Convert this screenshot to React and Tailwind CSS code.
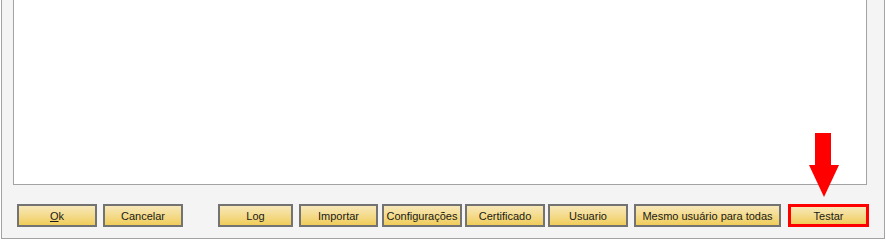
import React from 'react';

const Btn = ({ children, className = '' }) => (
    <button
        className={`h-[23px] border-2 border-[#737373] bg-gradient-to-b from-[#f7e8b8] to-[#f1cd58] text-[11px] text-[#1a1a1a] leading-none flex items-center justify-center pt-[1px] ${className}`}
    >
        {children}
    </button>
);

const App = () => {
    return (
        <div className="relative w-[886px] h-[241px] bg-white overflow-hidden font-['Liberation_Sans',Arial,sans-serif]">
            <div className="ml-[1px] w-[884px] h-[239px] bg-[#f4f4f4] border-x border-b border-[#a3a3a3] pl-[11px]">
                <div className="w-[854px] h-[185px] bg-white border-x border-b border-[#a3a3a3]"></div>

                <div className="flex items-start mt-[19px]">
                    <Btn className="ml-[4px] w-[80px]">
                        <span><span className="underline">O</span>k</span>
                    </Btn>
                    <Btn className="ml-[6px] w-[80px]">Cancelar</Btn>
                    <Btn className="ml-[35px] w-[75px]">Log</Btn>
                    <Btn className="ml-[6px] w-[79px]">Importar</Btn>
                    <Btn className="ml-[4px] w-[80px]">Configurações</Btn>
                    <Btn className="ml-[3px] w-[80px]">Certificado</Btn>
                    <Btn className="ml-[3px] w-[80px]">Usuario</Btn>
                    <Btn className="ml-[6px] w-[147px]">Mesmo usuário para todas</Btn>
                    <button className="ml-[7px] w-[81px] h-[23px] border-[3px] border-[#ff0000] bg-gradient-to-b from-[#f7e8b8] to-[#f1cd58] text-[11px] text-[#1a1a1a] leading-none flex items-center justify-center pt-[1px]">
                        Testar
                    </button>
                </div>
            </div>

            {/* annotation arrow */}
            <svg className="absolute left-[808px] top-[133px]" width="32" height="65" viewBox="0 0 32 65">
                <polygon points="7,0 23,0 23,32 31,32 16,64 1,32 7,32" fill="#ff0000" />
            </svg>
        </div>
    );
};

export default App;
